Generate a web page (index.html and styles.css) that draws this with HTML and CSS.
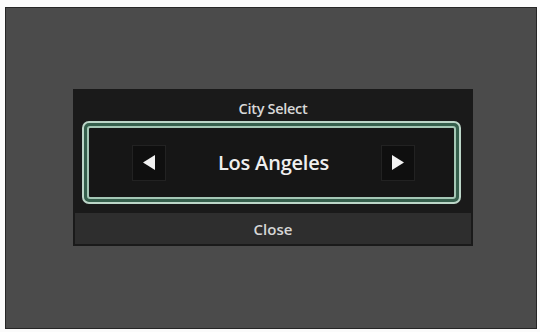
FILE: index.html
```html
<html>
  <head>
    <meta name="viewport" content="width=device-width, initial-scale=1">
    <meta charset="UTF-8">
    <link rel="stylesheet" href="styles.css">
  </head>
  <body>
    <div class="screen">
      <div class="dialog">
        <div class="title">City Select</div>
        <div class="frame">
          <div class="frame-inner">
            <div class="arrow-btn">
              <svg width="12" height="15" viewBox="0 0 12 15"><path d="M0 7.5 L12 0 L12 15 Z" fill="#f2f2f2"/></svg>
            </div>
            <div class="city">Los Angeles</div>
            <div class="arrow-btn">
              <svg width="12" height="15" viewBox="0 0 12 15"><path d="M12 7.5 L0 0 L0 15 Z" fill="#f2f2f2"/></svg>
            </div>
          </div>
        </div>
        <div class="close-bar">Close</div>
      </div>
    </div>
  </body>
</html>
```

FILE: styles.css
```css
body {
  margin: 0;
  background: #fbfbfb;
  font-family: "Open Sans", "Liberation Sans", sans-serif;
}
.screen {
  margin: 7px 0 0 5px;
  border: 1px solid #262626;
  background: #4b4b4b;
  padding: 81px 0 0 67px;
  box-sizing: content-box;
  width: 463px;
  height: 239px;
}
.dialog {
  width: 400px;
  height: 157px;
  background: #1a1a1a;
  display: flex;
  flex-direction: column;
  box-sizing: border-box;
  padding: 0 2px 2px 2px;
}
.title {
  height: 32px;
  box-sizing: border-box;
  padding-top: 11px;
  line-height: 18px;
  text-align: center;
  color: #d8d8d8;
  font-size: 14.5px;
  font-weight: 600;
  letter-spacing: -0.3px;
}
.frame {
  margin: 0 10px 0 7px;
  height: 83px;
  box-sizing: border-box;
  border: 2px solid #bcd6c8;
  border-radius: 7px;
  padding: 3px;
  background: #355f4c;
}
.frame-inner {
  height: 100%;
  box-sizing: border-box;
  border: 2px solid #a4c7b5;
  border-radius: 3px;
  background: #161616;
  display: flex;
  align-items: center;
  justify-content: space-between;
  padding: 0 39px 0 43px;
}
.arrow-btn {
  width: 34px;
  height: 36px;
  box-sizing: border-box;
  background: #0f0f0f;
  border: 1px solid #222;
  display: flex;
  align-items: center;
  justify-content: center;
}
.city {
  color: #efefef;
  font-size: 20px;
  font-weight: 600;
  letter-spacing: -0.2px;
}
.close-bar {
  margin-top: 9px;
  flex: 1;
  background: #2e2e2e;
  color: #d6d6d6;
  font-size: 15px;
  font-weight: 600;
  display: flex;
  align-items: center;
  justify-content: center;
}
```
